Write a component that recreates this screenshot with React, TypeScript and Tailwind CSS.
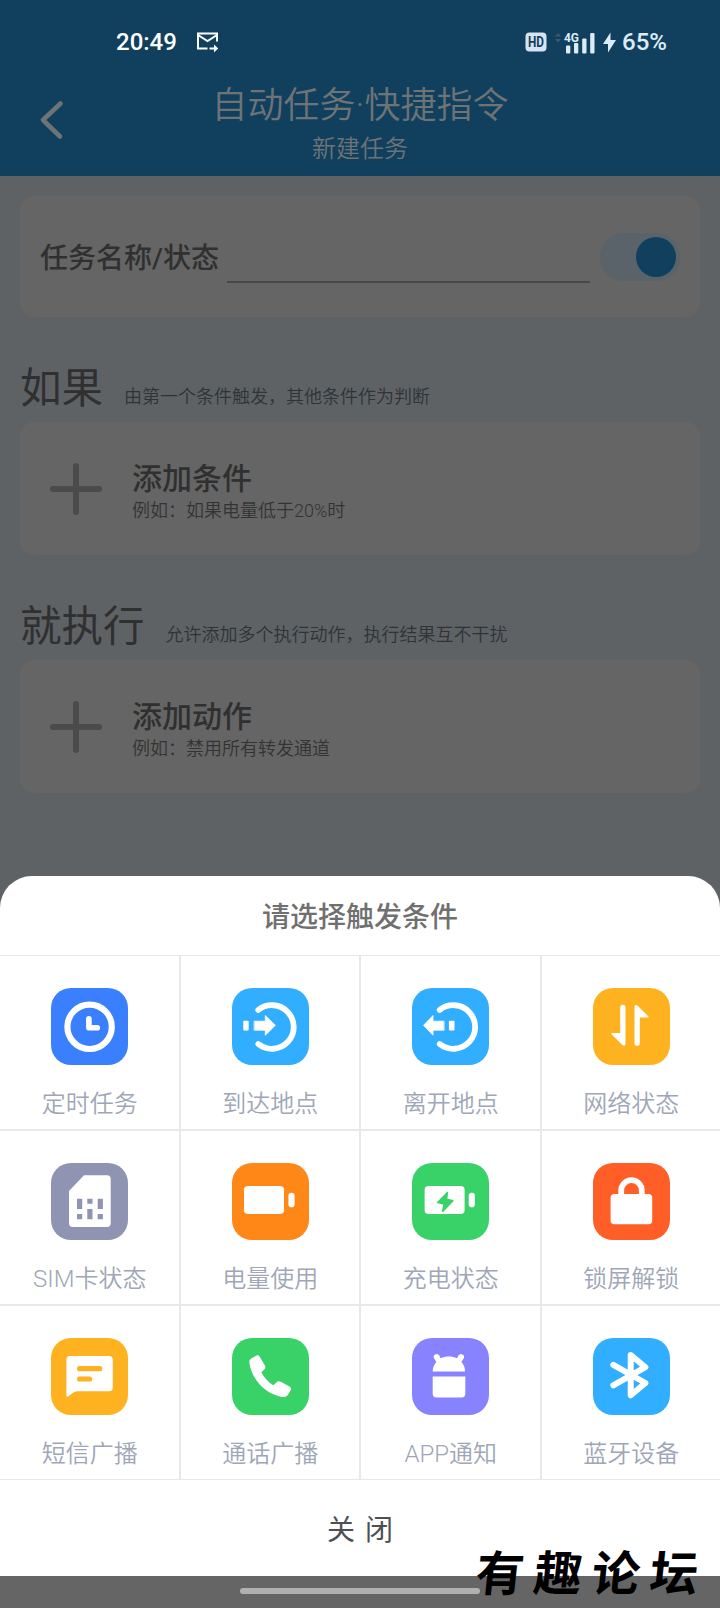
import * as React from 'react';

const conditions = [
    { label: '定时任务', color: 'bg-[#3a80fe]', icon: <ClockIcon /> },
    { label: '到达地点', color: 'bg-[#31aeff]', icon: <ArriveIcon /> },
    { label: '离开地点', color: 'bg-[#31aeff]', icon: <LeaveIcon /> },
    { label: '网络状态', color: 'bg-[#ffb220]', icon: <NetworkIcon /> },
    { label: 'SIM卡状态', color: 'bg-[#8e94b2]', icon: <SimIcon /> },
    { label: '电量使用', color: 'bg-[#ff8717]', icon: <BatteryIcon /> },
    { label: '充电状态', color: 'bg-[#39d269]', icon: <ChargeIcon /> },
    { label: '锁屏解锁', color: 'bg-[#ff5e26]', icon: <LockIcon /> },
    { label: '短信广播', color: 'bg-[#ffb220]', icon: <SmsIcon /> },
    { label: '通话广播', color: 'bg-[#39d269]', icon: <PhoneIcon /> },
    { label: 'APP通知', color: 'bg-[#8783ff]', icon: <AppIcon /> },
    { label: '蓝牙设备', color: 'bg-[#31aeff]', icon: <BluetoothIcon /> },
];

function Glyph({ children }: { children: React.ReactNode }) {
    return (
        <svg viewBox="0 0 77 77" className="h-full w-full" fill="#fff" strokeLinecap="round" strokeLinejoin="round">
            {children}
        </svg>
    );
}

function ClockIcon() {
    return (
        <Glyph>
            <circle cx="38.6" cy="38.8" r="22.2" fill="none" stroke="#fff" strokeWidth="6.2" />
            <path d="M37.9 30.8V39.8H46.3" fill="none" stroke="#fff" strokeWidth="5.6" />
        </Glyph>
    );
}

function ArriveIcon() {
    return (
        <Glyph>
            <path d="M26.3 22A21.8 21.8 0 1 1 26.3 56" fill="none" stroke="#fff" strokeWidth="5.8" />
            <path d="M22.5 33.2H33.3V27.6L43.4 37.3L33.3 47.2V42.2H22.5Z" stroke="#fff" strokeWidth="0.8" />
            <rect x="11.3" y="32.8" width="5.4" height="9.6" rx="0.8" />
        </Glyph>
    );
}

function LeaveIcon() {
    return (
        <Glyph>
            <path d="M27.7 22A21.8 21.8 0 1 1 27.7 56" fill="none" stroke="#fff" strokeWidth="5.8" />
            <path d="M31.7 33.2H21V27.6L11.5 37.3L21 47.2V42.2H31.7Z" stroke="#fff" strokeWidth="0.8" />
            <rect x="36.9" y="32.8" width="5.6" height="9.6" rx="0.8" />
        </Glyph>
    );
}

function NetworkIcon() {
    return (
        <Glyph>
            <path d="M27.2 19.5A2.6 2.6 0 0 1 32.5 19.5V56C32.5 58 30.5 58.2 29.3 57L18.6 46.3C18 45.6 18.2 45 19 45H27.2Z" />
            <path d="M46.8 55.2A2.6 2.6 0 0 1 41.5 55.2V18.8C41.5 17 43.5 16.5 44.7 17.7L55.2 28.3C55.8 29 55.6 29.6 54.8 29.6H46.8Z" />
        </Glyph>
    );
}

function SimIcon() {
    return (
        <Glyph>
            <path d="M33 12.3H56A3.7 3.7 0 0 1 59.7 16V60.3A3.7 3.7 0 0 1 56 64H21.7A3.7 3.7 0 0 1 18 60.3V28Z" />
            <path
                d="M26 35.7h5.2V46H26ZM36.3 35.7h5.2v5H36.3ZM46.7 35.7h5.2V46H46.7ZM26 51h5.2v5.3H26ZM36.3 46h5.2v10.3H36.3ZM46.7 51h5.2v5.3H46.7Z"
                fill="#8e94b2"
            />
        </Glyph>
    );
}

function BatteryIcon() {
    return (
        <Glyph>
            <rect x="12" y="23" width="40" height="28" rx="4" />
            <rect x="56.4" y="29.7" width="6.2" height="14.6" rx="3.1" />
        </Glyph>
    );
}

function ChargeIcon() {
    return (
        <Glyph>
            <rect x="12.6" y="23" width="40" height="28" rx="4" />
            <rect x="56.7" y="29.7" width="6.2" height="14.6" rx="3.1" />
            <path d="M35.4 29.4L25.6 39.5L32 41L30.6 48.4L40.9 37.8L34.7 36.2Z" fill="#39d269" stroke="#39d269" strokeWidth="1.4" />
        </Glyph>
    );
}

function LockIcon() {
    return (
        <Glyph>
            <rect x="17.6" y="31" width="41.6" height="30.2" rx="3.8" />
            <path d="M28.2 34V27.5A10.3 10.3 0 0 1 48.8 27.5V34" fill="none" stroke="#fff" strokeWidth="5.8" />
        </Glyph>
    );
}

function SmsIcon() {
    return (
        <Glyph>
            <path d="M19.3 18H58A3.8 3.8 0 0 1 61.8 21.8V49.5A3.8 3.8 0 0 1 58 53.3H26C24 53.3 20 56.3 17.3 58.4C16.2 59.2 15.4 58.6 15.4 57.6V21.8A3.8 3.8 0 0 1 19.3 18Z" />
            <path d="M28.6 30.7H48.7M28.6 41H38.6" stroke="#ffb220" strokeWidth="5.2" />
        </Glyph>
    );
}

function PhoneIcon() {
    return (
        <Glyph>
            <path d="M18.8 20.8L24 17.7C25.8 16.7 27 17.2 27.9 18.9L32.9 27.6C33.8 29.3 33.5 30.6 32 31.8L29.3 34.2C32 39.6 36.2 44 41.3 47.2L44.6 44.2C45.9 43 47.2 42.9 48.8 43.7L57.5 48.4C59 49.3 59.4 50.6 58.6 52.2L56 56.7C54.6 58.8 52.3 59.2 49.6 58.9C34.5 56.5 20 42.5 17.5 25.6C17.2 23.4 17.3 22 18.8 20.8Z" />
        </Glyph>
    );
}

function AppIcon() {
    return (
        <Glyph>
            <path d="M20.7 33.5C20.7 29.5 22 26.4 24.4 24L22.1 20.6A3 3 0 1 1 27.3 17.6L28.6 20.2C33.6 17.8 40.2 17.8 45 20.2L46.4 17.6A3 3 0 1 1 51.6 20.6L49.4 24C51.8 26.4 53.1 29.5 53.1 33.5Z" />
            <path d="M20.7 38.5H53.3V55.7A3.8 3.8 0 0 1 49.5 59.5H24.5A3.8 3.8 0 0 1 20.7 55.7Z" />
        </Glyph>
    );
}

function BluetoothIcon() {
    return (
        <Glyph>
            <path d="M20.3 26.8L52.4 45L37.7 57.3V17L52.4 29.2L20.3 47.3" fill="none" stroke="#fff" strokeWidth="6" />
        </Glyph>
    );
}

function StatusBar() {
    return (
        <div className="flex h-[84px] items-center pr-[53px] pl-[116px] text-[24px] font-medium text-white">
            <span className="w-[61px]">20:49</span>
            <svg viewBox="0 0 24 22" className="ml-[19px] h-[22px] w-[24px]" fill="none" stroke="#fff" strokeWidth="2">
                <path d="M11.5 17.5H2V2.5H21V10.5M2 4L11.5 10L21 4" />
                <path d="M13.5 17.5H20" />
                <path d="M18 13.5L22.2 17.5L18 21.5Z" fill="#fff" stroke="none" />
            </svg>
            <div className="ml-auto flex items-center text-[#dcecf7]">
                <svg viewBox="0 0 22 20" className="h-[20px] w-[22px]">
                    <rect x="0.5" y="0.5" width="21" height="19" rx="4" fill="#d5e4ef" />
                    <text x="3" y="15" fontSize="14" fontWeight="700" textLength="16" lengthAdjust="spacingAndGlyphs" fill="#11405e">
                        HD
                    </text>
                </svg>
                <svg viewBox="0 0 40 24" className="ml-[8px] h-[24px] w-[40px]" fill="#dcecf7">
                    <path d="M0 6.5L3 3L6 6.5ZM0 9L3 12.5L6 9Z" fill="#3d5a70" />
                    <text x="9" y="11.5" fontSize="13" fontWeight="700" textLength="15" lengthAdjust="spacingAndGlyphs">
                        4G
                    </text>
                    <rect x="11" y="15.5" width="4.3" height="8" rx="1" />
                    <rect x="19" y="13" width="4.3" height="10.5" rx="1" />
                    <rect x="27.2" y="8.5" width="4.3" height="15" rx="1" />
                    <rect x="35.2" y="3" width="4.3" height="20.5" rx="1" />
                </svg>
                <svg viewBox="0 0 13 20" className="ml-[8px] h-[21px] w-[13px]" fill="#dcecf7">
                    <path d="M7.5 0L0 11.5H5V20L13 7.5H7.5Z" />
                </svg>
                <span className="ml-[6px] text-[24px]">65%</span>
            </div>
        </div>
    );
}

function AddCard({ title, hint }: { title: string; hint: string }) {
    return (
        <div className="flex h-[133px] items-center rounded-[14px] bg-[#656565] pl-[30px]">
            <svg viewBox="0 0 52 52" className="h-[52px] w-[52px]" stroke="#4b4b4b" strokeWidth="6" strokeLinecap="round">
                <path d="M26 3V49M3 26H49" />
            </svg>
            <div className="ml-[30px] pt-[8px]">
                <h3 className="text-[30px] leading-[36px] font-medium text-[#303030]">{title}</h3>
                <p className="text-[18px] leading-[28px] font-[350] text-[#333333]">{hint}</p>
            </div>
        </div>
    );
}

function SectionTitle({ title, hint }: { title: string; hint: string }) {
    return (
        <div className="flex h-[70px] items-baseline gap-[21px] text-[#303030]">
            <h2 className="text-[41.5px] leading-[73px]">{title}</h2>
            <p className="text-[18px] font-[350] text-[#303336]">{hint}</p>
        </div>
    );
}

export default function App() {
    const [enabled, setEnabled] = React.useState(true);

    return (
        <div className="flex h-[1608px] w-[720px] flex-col overflow-hidden bg-[#5e6265] font-[Roboto,'Noto_Sans_CJK_SC',sans-serif]">
            <header className="h-[176px] bg-[#11405e] text-[#6e7376]">
                <StatusBar />
                <div className="grid grid-cols-[90px_1fr_90px] items-start">
                    <button className="pt-[16px] pl-[39px]" aria-label="返回">
                        <svg viewBox="0 0 26 40" className="h-[40px] w-[26px]" fill="none" stroke="#6e7376" strokeWidth="4.6" strokeLinecap="round" strokeLinejoin="round">
                            <path d="M21.5 3.5L4 20L21 36.5" />
                        </svg>
                    </button>
                    <div className="pt-px text-center">
                        <h1 className="text-[36px] leading-[42px] font-[350]">自动任务·快捷指令</h1>
                        <p className="text-[24px] leading-[44px] font-[350]">新建任务</p>
                    </div>
                </div>
            </header>

            <main className="h-[700px] px-[20px] pt-[20px]">
                <div className="flex h-[121px] items-center rounded-[14px] bg-[#656565] px-[20px]">
                    <label htmlFor="task-name" className="pt-[5px] text-[28px] font-medium text-[#303030]">
                        任务名称/状态
                    </label>
                    <input id="task-name" className="ml-[8px] h-[52px] w-[363px] border-b-2 border-[#484848] bg-transparent outline-none" />
                    <button
                        className="ml-auto flex h-[48px] w-[80px] items-center justify-end rounded-full bg-[#596369] pr-[4px]"
                        role="switch"
                        aria-checked={enabled}
                        aria-label="状态"
                        onClick={() => setEnabled((prev) => !prev)}
                    >
                        <span className="h-[40px] w-[40px] rounded-full bg-[#11405e]" />
                    </button>
                </div>
                <div className="mt-[35px]">
                    <SectionTitle title="如果" hint="由第一个条件触发，其他条件作为判断" />
                    <AddCard title="添加条件" hint="例如：如果电量低于20%时" />
                </div>
                <div className="mt-[35px]">
                    <SectionTitle title="就执行" hint="允许添加多个执行动作，执行结果互不干扰" />
                    <AddCard title="添加动作" hint="例如：禁用所有转发通道" />
                </div>
            </main>

            <section className="flex h-[700px] flex-col overflow-hidden rounded-t-[32px] bg-white">
                <h2 className="flex h-[79px] items-center justify-center pt-[5px] text-[28px] font-medium text-[#707070]">请选择触发条件</h2>
                <div className="grid grid-cols-4 gap-[2px] border-y border-[#e8e8e8] bg-[#e8e8e8]">
                    {conditions.map((item) => (
                        <button key={item.label} className="flex h-[173px] flex-col items-center bg-white pt-[32px] pl-px">
                            <span className={`h-[77px] w-[77px] rounded-[20px] ${item.color}`}>{item.icon}</span>
                            <span className="mt-[21px] text-[24px] leading-[36px] font-[350] text-[#9ea6b7]">{item.label}</span>
                        </button>
                    ))}
                </div>
                <button className="flex flex-1 items-center justify-center gap-[10px] pt-[5px] text-[28px] text-[#4c5054]">
                    <span>关</span>
                    <span>闭</span>
                </button>
            </section>

            <footer className="relative flex h-[32px] items-start justify-center bg-[#656565] pt-[12px]">
                <span className="h-[6px] w-[240px] rounded-full bg-[#b0b0b0]" />
                <span className="absolute right-[12px] bottom-[3px] -skew-x-6 text-[48px] leading-[60px] font-bold tracking-[10px] whitespace-nowrap text-black">
                    有趣论坛
                </span>
            </footer>
        </div>
    );
}
